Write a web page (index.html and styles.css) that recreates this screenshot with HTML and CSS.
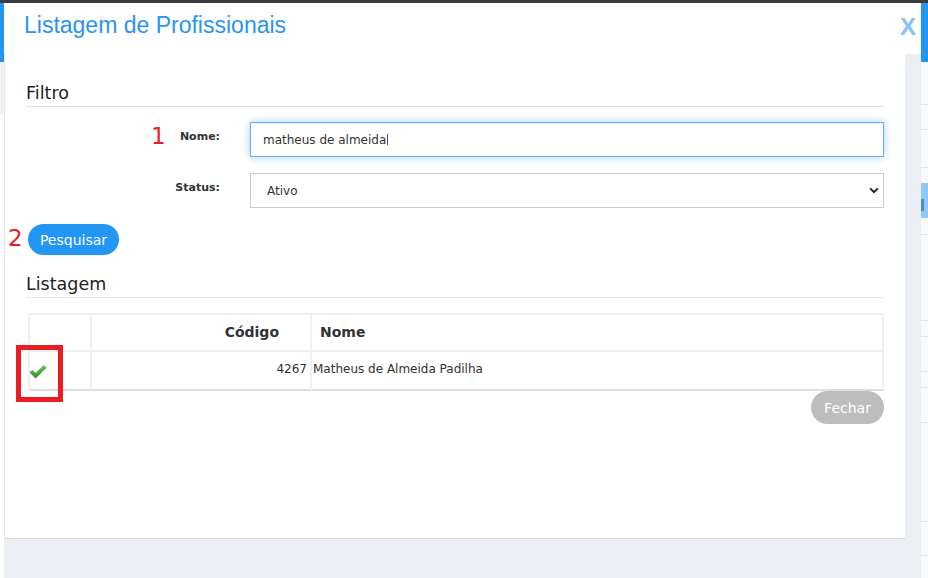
FILE: index.html
```html
<!DOCTYPE html>
<html lang="pt">
<head>
<meta charset="utf-8">
<title>Listagem de Profissionais</title>
<link rel="stylesheet" href="styles.css">
</head>
<body>
<div class="topbar"></div>
<div class="stage">
  <div class="edge edge-left"></div>
  <div class="modal">
    <header class="modal-header">
      <h1 class="modal-title">Listagem de Profissionais</h1>
      <span class="modal-close">X</span>
    </header>
    <div class="modal-main">
      <div class="modal-body">
        <h2 class="section-title">Filtro</h2>
        <div class="form-row first">
          <label class="form-label">Nome:</label>
          <div class="form-control focused">matheus de almeida<span class="caret"></span></div>
        </div>
        <div class="form-row">
          <label class="form-label">Status:</label>
          <div class="form-control select">
            <span>Ativo</span>
            <svg class="chevron" width="10" height="7" viewBox="0 0 10 7"><path d="M1.2 1.4 L5 5.2 L8.8 1.4" fill="none" stroke="#222" stroke-width="2"/></svg>
          </div>
        </div>
        <div class="actions">
          <button class="btn btn-primary">Pesquisar</button>
        </div>
        <h2 class="section-title list-title">Listagem</h2>
        <table class="grid">
          <colgroup><col class="c-sel"><col class="c-cod"><col></colgroup>
          <thead>
            <tr><th></th><th class="num">Código</th><th class="txt">Nome</th></tr>
          </thead>
          <tbody>
            <tr>
              <td class="sel"><svg class="check" width="18" height="14" viewBox="0 0 18 14"><defs><linearGradient id="g" x1="0" y1="0" x2="0" y2="1"><stop offset="0" stop-color="#6cc95a"/><stop offset="1" stop-color="#2f8f26"/></linearGradient></defs><path d="M0.5 7.6 L3.4 4.8 L6.6 7.9 L14.8 0 L17.6 2.8 L6.6 13.4 Z" fill="url(#g)"/></svg></td>
              <td class="num">4267</td>
              <td class="txt">Matheus de Almeida Padilha</td>
            </tr>
          </tbody>
        </table>
        <div class="footer-actions">
          <button class="btn btn-default">Fechar</button>
        </div>
        <span class="marker m1">1</span>
        <span class="marker m2">2</span>
        <span class="highlight"></span>
      </div>
      <div class="track"></div>
    </div>
    <div class="modal-footer"></div>
  </div>
  <div class="edge edge-right"></div>
</div>
</body>
</html>
```
FILE: styles.css
```css
* { box-sizing: border-box; }
html, body { margin: 0; padding: 0; }
body {
  width: 928px;
  height: 578px;
  overflow: hidden;
  background: #fff;
  font-family: "DejaVu Sans", Verdana, sans-serif;
  color: #333;
}
.topbar { height: 3px; background: #3b3b3b; }
.stage { display: flex; height: 575px; }

.edge { flex: none; overflow: hidden; position: relative; }
.edge-left {
  width: 4px;
  background:
    linear-gradient(#2196f3, #2196f3) 0 0 / 100% 59px no-repeat,
    linear-gradient(#f2f2f2, #f2f2f2) 0 59px / 100% 52px no-repeat,
    #fff;
}
.edge-right {
  width: 7px;
  background:
    linear-gradient(#2196f3, #2196f3) 0 0 / 100% 59px no-repeat,
    linear-gradient(#e2e4e8, #e2e4e8) 0 101px / 100% 1px no-repeat,
    linear-gradient(#e2e4e8, #e2e4e8) 0 126px / 100% 1px no-repeat,
    linear-gradient(#e2e4e8, #e2e4e8) 0 164px / 100% 1px no-repeat,
    linear-gradient(#4a8fd0, #4a8fd0) 0 196px / 3px 12px no-repeat,
    linear-gradient(#90c8f6, #90c8f6) 0 180px / 100% 35px no-repeat,
    linear-gradient(#e2e4e8, #e2e4e8) 0 231px / 100% 1px no-repeat,
    linear-gradient(#e2e4e8, #e2e4e8) 0 317px / 100% 1px no-repeat,
    linear-gradient(#e2e4e8, #e2e4e8) 0 333px / 100% 1px no-repeat,
    linear-gradient(#e2e4e8, #e2e4e8) 0 368px / 100% 1px no-repeat,
    linear-gradient(#e2e4e8, #e2e4e8) 0 384px / 100% 1px no-repeat,
    linear-gradient(#e2e4e8, #e2e4e8) 0 419px / 100% 1px no-repeat,
    linear-gradient(#e2e4e8, #e2e4e8) 0 518px / 100% 1px no-repeat,
    linear-gradient(#e2e4e8, #e2e4e8) 0 552px / 100% 1px no-repeat,
    #f8f9fb;
}

.modal { width: 917px; display: flex; flex-direction: column; }
.modal-header {
  height: 51px;
  flex: none;
  display: flex;
  justify-content: space-between;
  align-items: flex-start;
  padding: 9px 5px 0 20px;
  background: #fff;
}
.modal-title {
  margin: 0;
  font: 400 23px/26px "Liberation Sans", Arial, sans-serif;
  color: #2b94ee;
}
.modal-close {
  margin-top: 2px;
  font: 700 24px/26px "Liberation Sans", Arial, sans-serif;
  color: #85c4f6;
}

.modal-main { display: flex; height: 485px; flex: none; }
.modal-body {
  position: relative;
  width: 901px;
  border-left: 1px solid #e6e6e6;
  border-bottom: 1px solid #d5d8dc;
  background: #fff;
  padding: 0 21px 0 21px;
  display: flex;
  flex-direction: column;
}
.track { flex: 1; background: #ebeef3; }
.modal-footer { flex: 1; background: #ebeef3; }

.section-title {
  margin: 29px 0 0;
  padding-bottom: 3px;
  border-bottom: 1px solid #e3e3e3;
  font: 400 17.5px/20px "DejaVu Sans", Verdana, sans-serif;
  color: #222;
}
.list-title { margin-top: 19px; }

.form-row { display: flex; gap: 30px; margin-top: 16px; }
.form-row.first { margin-top: 15px; }
.form-label {
  width: 194px;
  flex: none;
  text-align: right;
  padding-top: 7px;
  font: 700 11px/16px "DejaVu Sans", Verdana, sans-serif;
  color: #333;
}
.form-control {
  flex: 1;
  height: 35px;
  display: flex;
  align-items: center;
  border: 1px solid #ccc;
  padding: 0 12px;
  font-size: 12px;
  color: #333;
  background: #fff;
}
.form-control.focused {
  border-color: #66afe9;
  box-shadow: inset 0 1px 1px rgba(0,0,0,.075), 0 0 8px rgba(102,175,233,.6);
}
.caret { width: 1px; height: 11px; margin-left: 1px; background: #555; }
.form-control.select {
  justify-content: space-between;
  padding: 0 4px 0 16px;
}
.chevron { display: block; }

.actions { margin-top: 16px; padding-left: 2px; display: flex; }
.btn {
  border: 0;
  border-radius: 17px;
  color: #fff;
  font: 400 14px/1 "DejaVu Sans", Verdana, sans-serif;
  padding: 0;
  display: flex;
  align-items: center;
  justify-content: center;
}
.btn-primary { width: 91px; height: 31px; background: #2196f3; }
.btn-default { width: 73px; height: 33px; background: #bdbdbd; }

.grid {
  margin: 15px 0 0 2px;
  width: 856px;
  table-layout: fixed;
  border-collapse: separate;
  border-spacing: 0;
  border-top: 2px solid #f0f0f0;
  border-left: 2px solid #f0f0f0;
}
.c-sel { width: 62px; }
.c-cod { width: 220px; }
.grid th, .grid td {
  border-right: 2px solid #f0f0f0;
  border-bottom: 2px solid #f0f0f0;
  padding: 0;
}
.grid th {
  height: 37px;
  font: 700 14px/17px "DejaVu Sans", Verdana, sans-serif;
  color: #333;
  vertical-align: middle;
}
.grid th.num { text-align: right; padding-right: 31px; }
.grid th.txt { text-align: left; padding-left: 8px; }
.grid td {
  height: 39px;
  border-bottom-color: #dedede;
  font: 400 12px/17px "DejaVu Sans", Verdana, sans-serif;
  color: #333;
  vertical-align: top;
  padding-top: 9px;
}
.grid td.num { text-align: right; padding-right: 3px; }
.grid td.txt { text-align: left; padding-left: 1px; }
.grid td.sel { padding-top: 13px; }
.check { display: block; margin-left: -1px; }

.footer-actions { display: flex; justify-content: flex-end; margin-top: 0; }

.marker {
  position: absolute;
  font: 400 23px/23px "DejaVu Sans", sans-serif;
  color: #ec1c24;
}
.m1 { left: 146px; top: 71px; }
.m2 { left: 3px; top: 173px; }
.highlight {
  position: absolute;
  left: 11px;
  top: 291px;
  width: 47px;
  height: 57px;
  border: 5px solid #ec1c24;
}
```
